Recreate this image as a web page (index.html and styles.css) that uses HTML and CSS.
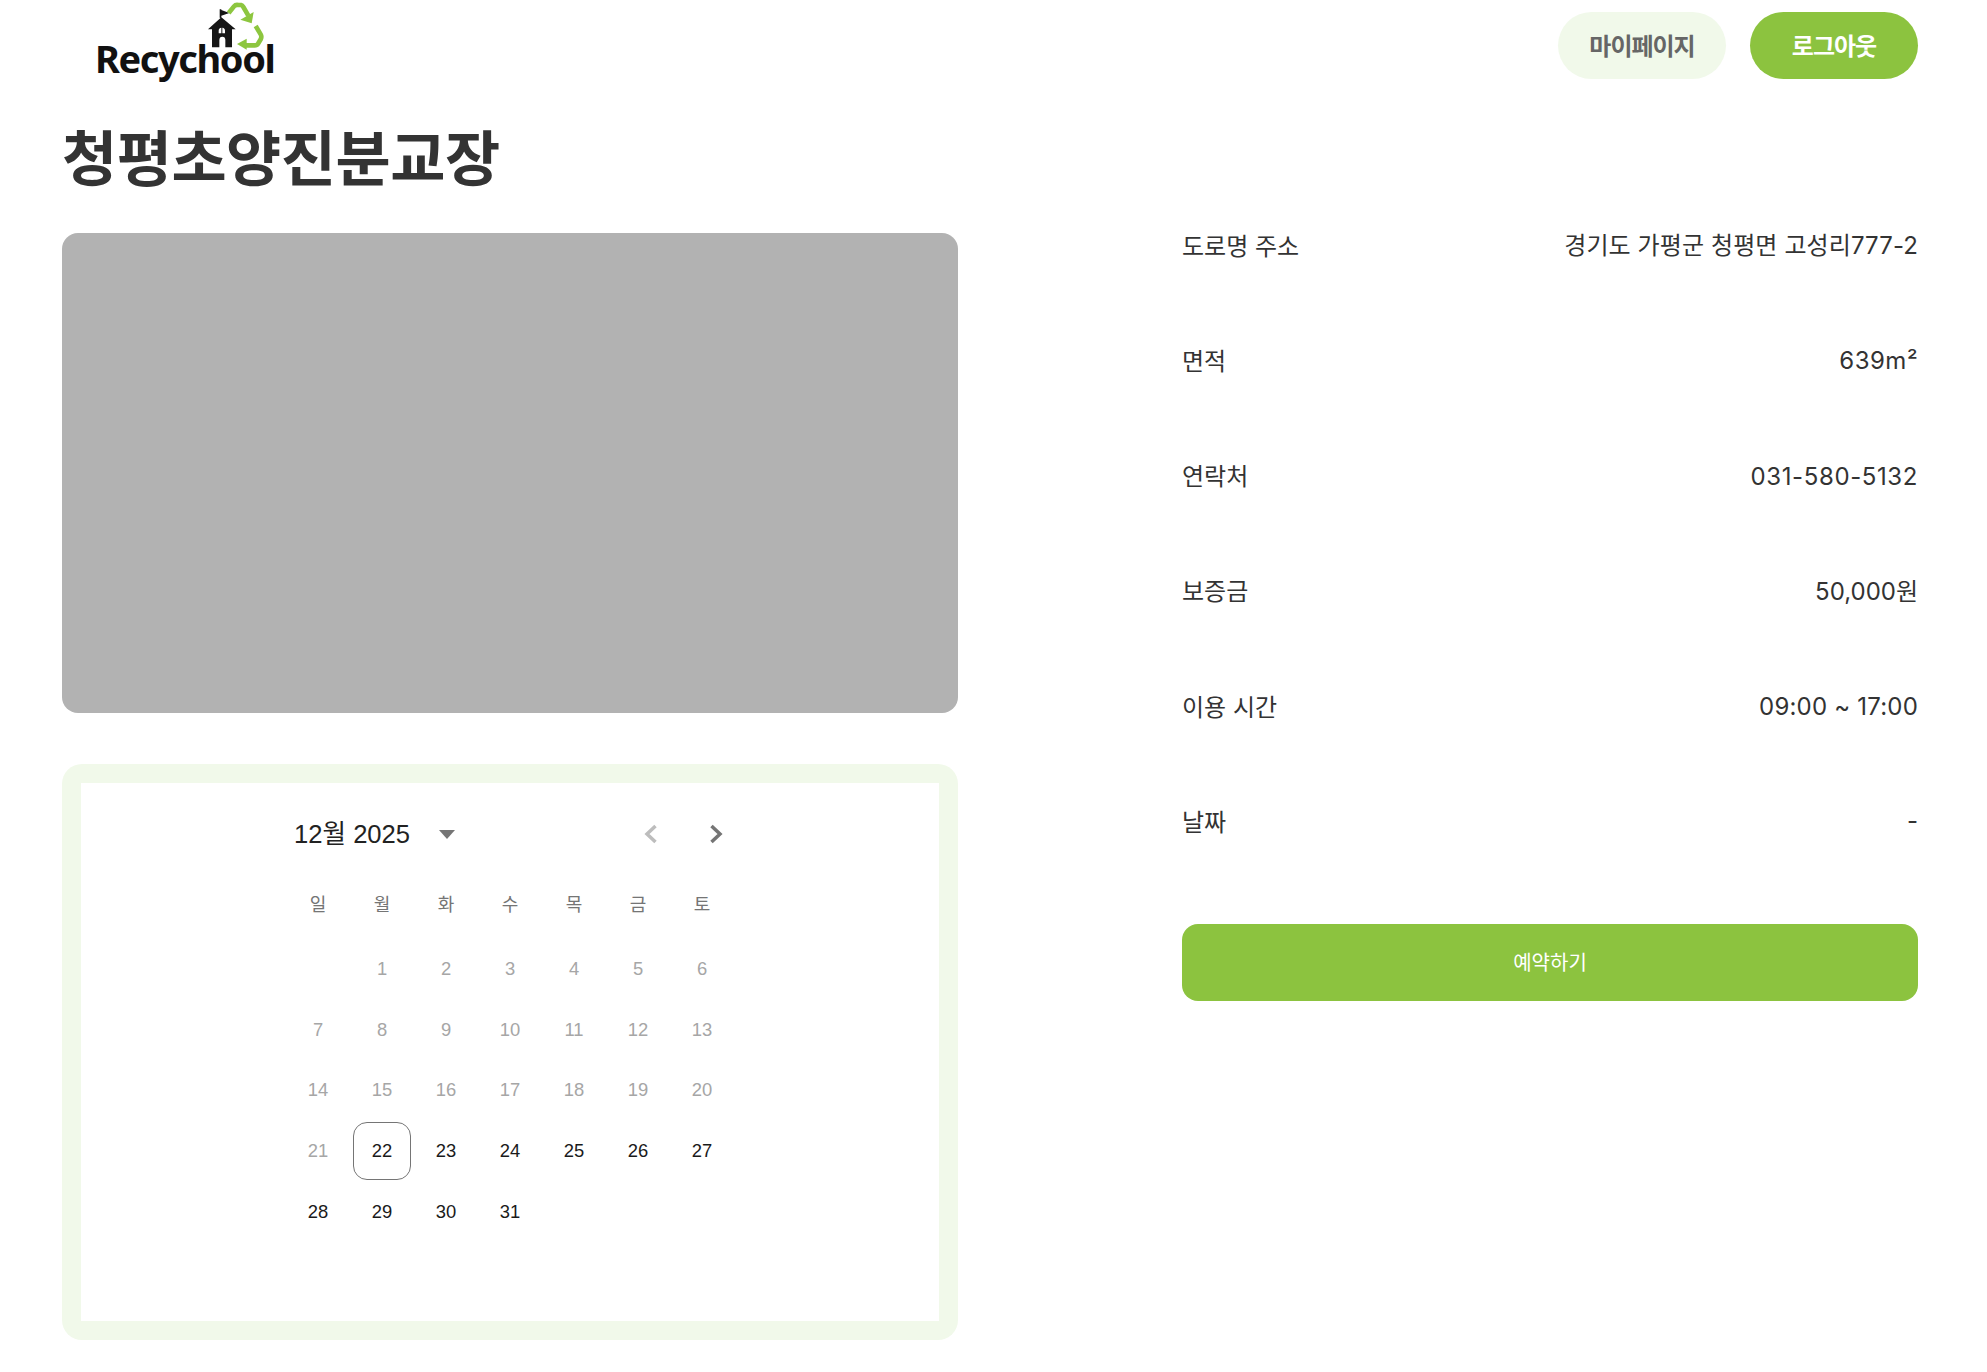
FILE: index.html
```html
<!DOCTYPE html>
<html lang="ko">
<head>
<meta charset="utf-8">
<title>청평초양진분교장</title>
<link rel="stylesheet" href="styles.css">
</head>
<body>
<header class="topbar">
  <a class="logo">
    <svg class="logo-mark" viewBox="430 0 200 150" width="66.7" height="50">
      <path class="mark-black" d="M485 28v24l-2 2-3-1V28zM485 30l24 9-24 8zM485 52l43 36h-11v54h-20v-22q0-10-9-10t-9 10v22h-22V88h-12z"/>
      <path class="mark-white" d="M477 100v-8q0-8 8-9v17zM488 100V83q8 1 8 9v8z"/>
      <path class="mark-green-line" d="M507 39l16-20q5-6 13-4h8q4 1 7 6l15 26"/>
      <path class="mark-green" d="M582 36l-6 34-34-11z"/>
      <path class="mark-green-line" d="M588 78l15 25q4 7 0 15l-8 13q-3 5-10 5h-30"/>
      <path class="mark-green" d="M561 116v33l-29-17z"/>
    </svg>
    <span class="logo-text">Recychool</span>
  </a>
  <nav class="actions">
    <button class="pill pill-light">마이페이지</button>
    <button class="pill pill-green">로그아웃</button>
  </nav>
</header>

<main class="page">
  <h1 class="title">청평초양진분교장</h1>
  <div class="columns">
    <section class="left">
      <div class="photo"></div>
      <div class="calendar">
        <div class="cal-inner">
          <div class="cal-head">
            <div class="month">
              <span class="month-label">12월 2025</span>
              <svg class="caret" viewBox="0 0 16 9" width="16" height="9"><path d="M0 0h16L8 9z"/></svg>
            </div>
            <div class="nav">
              <svg class="chev chev-off" viewBox="0 0 14 20" width="14" height="20"><path d="M11.5 2 3 10l8.500 8"/></svg>
              <svg class="chev" viewBox="0 0 14 20" width="14" height="20"><path d="M2.500 2 11 10l-8.500 8"/></svg>
            </div>
          </div>
          <div class="weekdays">
            <span>일</span><span>월</span><span>화</span><span>수</span><span>목</span><span>금</span><span>토</span>
          </div>
          <div class="days">
            <span></span><span class="off">1</span><span class="off">2</span><span class="off">3</span><span class="off">4</span><span class="off">5</span><span class="off">6</span>
            <span class="off">7</span><span class="off">8</span><span class="off">9</span><span class="off">10</span><span class="off">11</span><span class="off">12</span><span class="off">13</span>
            <span class="off">14</span><span class="off">15</span><span class="off">16</span><span class="off">17</span><span class="off">18</span><span class="off">19</span><span class="off">20</span>
            <span class="off">21</span><span class="today">22</span><span>23</span><span>24</span><span>25</span><span>26</span><span>27</span>
            <span>28</span><span>29</span><span>30</span><span>31</span>
          </div>
        </div>
      </div>
    </section>
    <section class="right">
      <div class="row"><span class="label">도로명 주소</span><span class="value v-addr">경기도 가평군 청평면 고성리777-2</span></div>
      <div class="row"><span class="label">면적</span><span class="value v-area">639m²</span></div>
      <div class="row"><span class="label">연락처</span><span class="value v-phone">031-580-5132</span></div>
      <div class="row"><span class="label">보증금</span><span class="value">50,000원</span></div>
      <div class="row"><span class="label">이용 시간</span><span class="value v-time">09:00 ~ 17:00</span></div>
      <div class="row"><span class="label">날짜</span><span class="value">-</span></div>
      <button class="reserve">예약하기</button>
    </section>
  </div>
</main>
</body>
</html>
```
FILE: styles.css
```css
* { box-sizing: border-box; }
html, body { margin: 0; padding: 0; background: #fff; }
body { font-family: Inter, "Noto Sans CJK KR", sans-serif; color: #333; }

.topbar {
  display: flex;
  justify-content: space-between;
  padding: 0 69px 0 96px;
  height: 100px;
}
.logo { display: flex; flex-direction: column; align-items: flex-start; }
.logo-mark { display: block; margin: 0 0 0 107px; }
.mark-black { fill: #161616; }
.mark-white { fill: #fff; }
.mark-green { fill: #8dc63f; }
.mark-green-line { fill: none; stroke: #8dc63f; stroke-width: 14; }
.logo-text {
  font-family: "Noto Sans", sans-serif;
  font-weight: 700;
  font-size: 38px;
  line-height: 40px;
  letter-spacing: -1.4px;
  color: #111;
  margin: -12px 0 0 -1px;
}
.actions { display: flex; gap: 24px; padding-top: 12px; }
.pill {
  width: 168px;
  height: 67px;
  border: 0;
  border-radius: 34px;
  padding: 0 0 2px;
  font-family: inherit;
  font-size: 24px;
  font-weight: 700;
  letter-spacing: -1px;
}
.pill-light { background: #f1f9ea; color: #666; }
.pill-green { background: #8cc33f; color: #fff; }

.page { padding: 0 69px 32px 62px; }
.title {
  margin: 0;
  height: 133px;
  font-size: 60px;
  line-height: 118px;
  font-weight: 700;
  letter-spacing: -0.5px;
  color: #333;
}
.columns { display: grid; grid-template-columns: 896px 736px; justify-content: space-between; }

.photo { height: 480px; background: #b2b2b2; border-radius: 16px; }
.calendar {
  margin-top: 51px;
  height: 576px;
  padding: 19px;
  background: #f1f9ea;
  border-radius: 20px;
}
.cal-inner { height: 100%; background: #fff; padding-top: 31px; }
.cal-head {
  width: 448px;
  height: 40px;
  margin: 0 auto;
  display: flex;
  justify-content: space-between;
  align-items: center;
  padding: 0 11px 0 8px;
}
.month {
  display: flex;
  align-items: center;
  gap: 29px;
  font-family: "Liberation Sans", "Noto Sans CJK KR", sans-serif;
  font-size: 25.6px;
  color: #222;
}
.month-label { padding-bottom: 5px; }
.caret { fill: #757575; }
.nav { display: flex; gap: 51px; }
.chev { fill: none; stroke: #757575; stroke-width: 3.5; }
.chev-off { stroke: #bdbdbd; }
.weekdays, .days {
  width: 448px;
  margin: 0 auto;
  display: grid;
  grid-template-columns: repeat(7, 64px);
  font-family: "Liberation Sans", "Noto Sans CJK KR", sans-serif;
  justify-items: center;
  align-items: center;
}
.weekdays {
  margin-top: 29px;
  height: 40px;
  font-size: 18px;
  color: #757575;
}
.days {
  margin-top: 15.4px;
  grid-auto-rows: 60.8px;
  font-size: 18.4px;
  color: #1a1a1a;
}
.days span {
  width: 58px;
  height: 58px;
  display: flex;
  align-items: center;
  justify-content: center;
  border: 1px solid transparent;
  border-radius: 14px;
}
.days .off { color: #a6a6a6; }
.days .today { border-color: #757575; }

.right { display: flex; flex-direction: column; gap: 91.3px; margin-top: -1px; }
.row {
  display: flex;
  justify-content: space-between;
  align-items: center;
  height: 24px;
  font-size: 24px;
  color: #333;
}
.label, .value { white-space: nowrap; }
.v-addr { padding-bottom: 2px; letter-spacing: 0.1px; }
.v-area { padding-top: 3px; letter-spacing: 0.5px; }
.v-phone { padding-top: 3px; letter-spacing: 0.6px; }
.v-time { padding-top: 2px; letter-spacing: 0.2px; }
.reserve {
  height: 77px;
  border: 0;
  border-radius: 16px;
  padding: 0 0 2px;
  background: #8cc33f;
  color: #fff;
  font-family: inherit;
  font-size: 20px;
}
```
